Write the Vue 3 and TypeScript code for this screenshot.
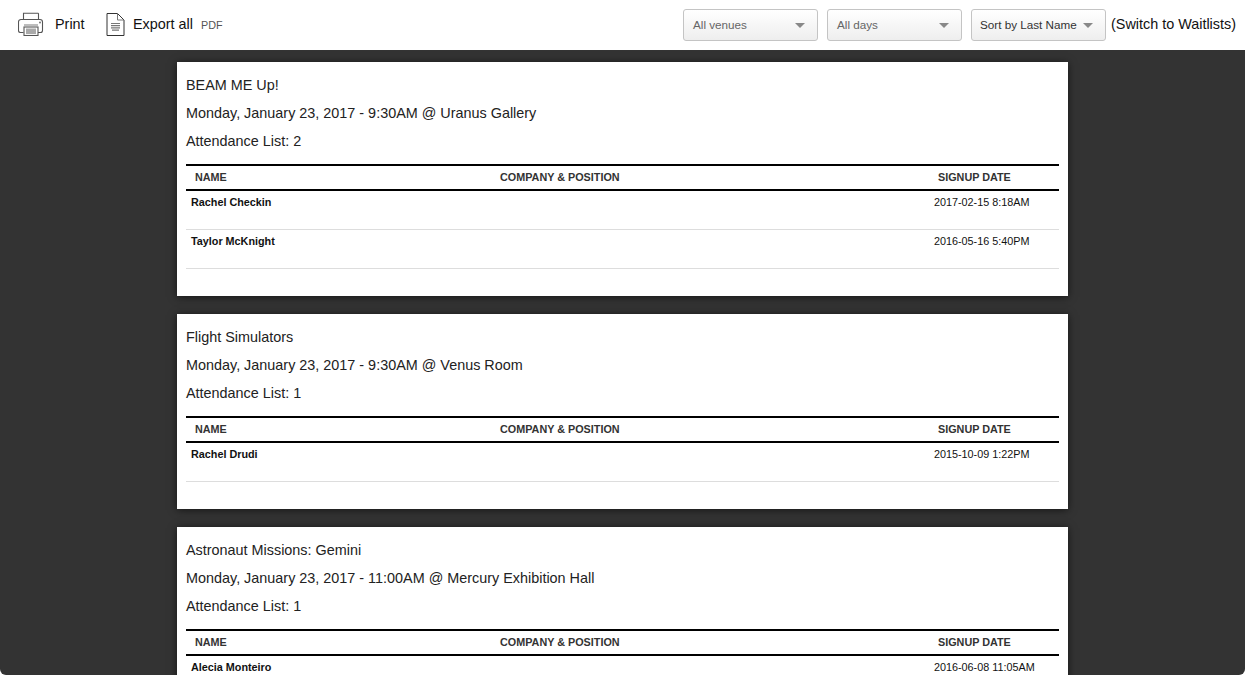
<script setup lang="ts">
interface Attendee { name: string; date: string }
interface Session { title: string; when: string; people: Attendee[] }
const sessions: Session[] = [
  { title: 'BEAM ME Up!', when: 'Monday, January 23, 2017 - 9:30AM @ Uranus Gallery', people: [
    { name: 'Rachel Checkin', date: '2017-02-15 8:18AM' },
    { name: 'Taylor McKnight', date: '2016-05-16 5:40PM' },
  ] },
  { title: 'Flight Simulators', when: 'Monday, January 23, 2017 - 9:30AM @ Venus Room', people: [
    { name: 'Rachel Drudi', date: '2015-10-09 1:22PM' },
  ] },
  { title: 'Astronaut Missions: Gemini', when: 'Monday, January 23, 2017 - 11:00AM @ Mercury Exhibition Hall', people: [
    { name: 'Alecia Monteiro', date: '2016-06-08 11:05AM' },
  ] },
]
const filters = [
  { label: 'All venues', cls: 'wide' },
  { label: 'All days', cls: 'wide' },
  { label: 'Sort by Last Name', cls: 'sort' },
]
</script>

<template>
  <div class="page">
    <header class="bar">
      <a class="tool print">
        <svg width="26" height="24" viewBox="0 0 26 24" fill="none" stroke="#555" stroke-width="1.1">
          <path d="M5.5 7.5V1.2h14.5l.5.5v5.8" />
          <path d="M5.5 20.5H2.5a2 2 0 0 1-2-2V10a2.5 2.5 0 0 1 2.5-2.5h19a2.5 2.5 0 0 1 2.5 2.5v8.5a2 2 0 0 1-2 2h-3" />
          <rect x="6" y="15" width="14" height="8.5" fill="#fff" stroke="#555" />
          <rect x="8" y="16.5" width="10" height="5.5" fill="#aaa" stroke="none" />
          <path d="M6 13h14" stroke="#888" />
          <circle cx="22" cy="10.5" r="0.9" fill="#666" stroke="none" />
        </svg>
        <span>Print</span>
      </a>
      <a class="tool export">
        <svg width="19" height="23" viewBox="0 0 19 23" fill="none" stroke="#333" stroke-width="1">
          <path d="M1 .5h10.5L18 7v15.5H1z" />
          <path d="M11.5 .5V7H18" stroke="#777" />
          <path d="M5 10.5h9M5 12.7h9M5 14.9h9M6 17.1h7" stroke="#777" stroke-width="1.2" />
        </svg>
        <span>Export all</span>
        <small>PDF</small>
      </a>
      <div class="spacer"></div>
      <div v-for="f in filters" :key="f.label" class="select" :class="f.cls">
        <span>{{ f.label }}</span>
        <i class="caret"></i>
      </div>
      <a class="switch">(Switch to Waitlists)</a>
    </header>
    <main class="sheet">
      <section v-for="s in sessions" :key="s.title" class="card">
        <p class="line">{{ s.title }}</p>
        <p class="line">{{ s.when }}</p>
        <p class="line">Attendance List: {{ s.people.length }}</p>
        <div class="head row-grid">
          <span>NAME</span>
          <span>COMPANY &amp; POSITION</span>
          <span>SIGNUP DATE</span>
        </div>
        <div v-for="p in s.people" :key="p.name" class="row row-grid">
          <b>{{ p.name }}</b>
          <span></span>
          <span class="date">{{ p.date }}</span>
        </div>
      </section>
    </main>
  </div>
</template>

<style>
html, body { margin: 0; height: 100%; overflow: hidden; background: #fff; }
</style>

<style scoped>
.page {
  width: 1245px;
  height: 675px;
  overflow: hidden;
  font-family: "Liberation Sans", Arial, sans-serif;
  color: #111;
  display: flex;
  flex-direction: column;
}
.bar {
  height: 50px;
  flex: none;
  display: flex;
  align-items: center;
  padding: 0 9px 0 18px;
  box-sizing: border-box;
  background: #fff;
}
.tool { display: flex; align-items: center; font-size: 14.4px; margin-bottom: 2px; }
.tool svg { display: block; }
.print { width: 88px; }
.print span { margin-left: 11px; }
.export span { margin-left: 8px; }
.export small { margin-left: 8px; font-size: 10.8px; color: #555; position: relative; top: 1px; }
.spacer { flex: 1; }
.select {
  height: 32px;
  width: 135px;
  box-sizing: border-box;
  margin-right: 9px;
  padding: 0 12px 0 9px;
  display: flex;
  align-items: center;
  justify-content: space-between;
  border: 1px solid #c4c4c4;
  border-radius: 3px;
  background: linear-gradient(#fff, #eee);
  font-size: 11.7px;
  color: #666;
}
.select span { margin-bottom: 2px; }
.select.sort { color: #333; margin-right: 5px; padding: 0 12px 0 8px; }
.caret {
  width: 0;
  height: 0;
  border-left: 5px solid transparent;
  border-right: 5px solid transparent;
  border-top: 5px solid #888;
}
.switch { font-size: 14.4px; margin-bottom: 2px; }
.sheet {
  flex: 1;
  background: #333;
  border-radius: 0 0 6px 6px;
  padding-top: 12px;
  overflow: hidden;
  display: flex;
  flex-direction: column;
  align-items: center;
  gap: 18px;
}
.card {
  width: 891px;
  flex: none;
  box-sizing: border-box;
  background: #fff;
  padding: 9px 9px 27px;
  box-shadow: 0 1px 8px rgba(0, 0, 0, 0.6);
}
.line { margin: 0; height: 28px; line-height: 28px; font-size: 14.4px; color: #222; }
.row-grid { display: grid; grid-template-columns: 305px 438px 130px; }
.head {
  margin-top: 9px;
  height: 27px;
  box-sizing: border-box;
  border-top: 2px solid #000;
  border-bottom: 2px solid #000;
  align-items: center;
  font-size: 10.8px;
  font-weight: 700;
  color: #333;
  line-height: 23px;
}
.head span { padding-left: 9px; }
.row {
  height: 39px;
  box-sizing: border-box;
  border-bottom: 1px solid #ddd;
  padding-top: 5px;
  font-size: 10.8px;
  line-height: 12px;
}
.row b, .date { padding-left: 5px; }
</style>
